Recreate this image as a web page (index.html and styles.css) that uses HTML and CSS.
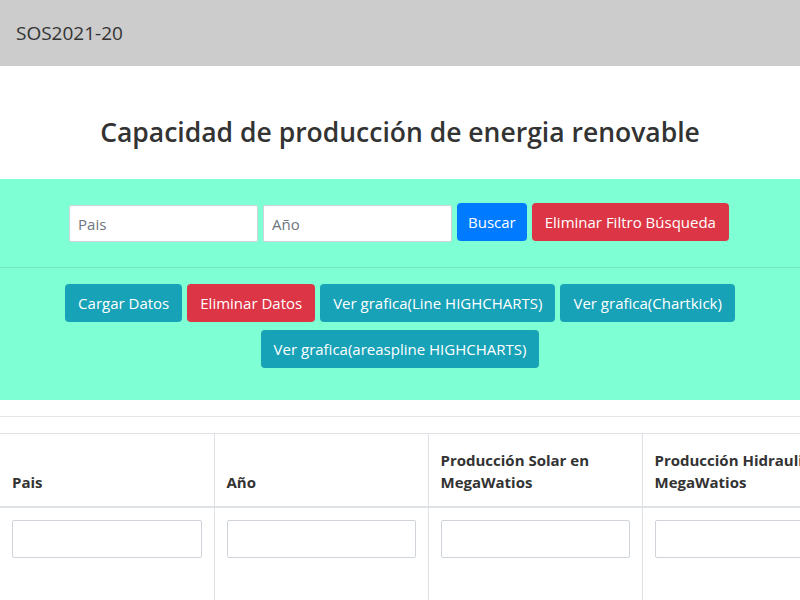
FILE: index.html
```html
<!DOCTYPE html>
<html lang="es">
<head>
<meta charset="utf-8">
<title>SOS2021-20</title>
<link rel="stylesheet" href="styles.css">
</head>
<body>
<nav class="navbar"><span class="brand">SOS2021-20</span></nav>
<main>
  <h3 class="title">Capacidad de producción de energia renovable</h3>
  <section class="panel">
    <div class="search">
      <input class="field" placeholder="Pais">
      <input class="field" placeholder="Año">
      <button class="btn primary">Buscar</button>
      <button class="btn danger">Eliminar Filtro Búsqueda</button>
    </div>
    <hr class="rule">
    <div class="actions">
      <button class="btn info">Cargar Datos</button>
      <button class="btn danger">Eliminar Datos</button>
      <button class="btn info">Ver grafica(Line HIGHCHARTS)</button>
      <button class="btn info">Ver grafica(Chartkick)</button>
      <button class="btn info">Ver grafica(areaspline HIGHCHARTS)</button>
    </div>
  </section>
  <hr class="sep">
  <div class="table-wrap">
    <table class="grid">
      <thead>
        <tr>
          <th>Pais</th>
          <th>Año</th>
          <th>Producción Solar en MegaWatios</th>
          <th>Producción Hidraulica en MegaWatios</th>
          <th>Producción Eólica en MegaWatios</th>
          <th>Acciones</th>
        </tr>
      </thead>
      <tbody>
        <tr>
          <td><input class="cell-input"></td>
          <td><input class="cell-input"></td>
          <td><input class="cell-input"></td>
          <td><input class="cell-input"></td>
          <td><input class="cell-input"></td>
          <td></td>
        </tr>
      </tbody>
    </table>
  </div>
</main>
</body>
</html>
```
FILE: styles.css
```css
html, body {
  margin: 0;
  padding: 0;
  overflow: hidden;
}
body {
  font-family: "Open Sans", "Noto Sans", sans-serif;
  color: #333333;
  background: #ffffff;
  font-size: 16px;
  line-height: 1.5;
}
.navbar {
  background: #cccccc;
  height: 66px;
  display: flex;
  align-items: center;
  padding: 0 16px;
  box-sizing: border-box;
}
.brand {
  font-size: 19px;
  color: #333333;
}
.title {
  margin: 0;
  padding: 50px 0 31px;
  line-height: 32px;
  text-align: center;
  font-size: 26.5px;
  font-weight: 600;
  color: #333333;
}
.panel {
  background: #7fffd4;
  padding: 24px 0 32px;
}
.search, .actions {
  display: flex;
  flex-wrap: wrap;
  justify-content: center;
  gap: 9px 5px;
}
.search {
  align-items: flex-start;
  padding-right: 2px;
}
.field {
  width: 189px;
  height: 37px;
  box-sizing: border-box;
  border: 1px solid #ced4da;
  border-radius: 2px;
  padding: 6px 8px;
  font: inherit;
  font-size: 15px;
  margin-top: 2px;
  background: #ffffff;
}
.field::placeholder {
  color: #6c757d;
}
.btn {
  font: inherit;
  font-size: 15px;
  height: 38px;
  padding: 0 12px;
  border: 1px solid transparent;
  border-radius: 4px;
  color: #ffffff;
  cursor: pointer;
}
.primary { background: #007bff; padding: 0 10px; }
.danger { background: #dc3545; }
.info { background: #17a2b8; }
.rule {
  margin: 25px 0 16px;
  border: 0;
  border-top: 1px solid rgba(0, 0, 0, 0.1);
}
.actions {
  padding: 0 48px;
  row-gap: 8px;
}
.sep {
  margin: 16px 0 16px;
  border: 0;
  border-top: 1px solid rgba(0, 0, 0, 0.1);
}
.table-wrap {
  overflow: hidden;
}
.grid {
  border-collapse: collapse;
  table-layout: fixed;
  width: 1284px;
}
.grid th, .grid td {
  width: 214px;
  border: 1px solid #dee2e6;
  padding: 12px;
  text-align: left;
  box-sizing: border-box;
}
.grid th {
  vertical-align: bottom;
  border-bottom: 2px solid #dee2e6;
  font-size: 15px;
  font-weight: 700;
  height: 73px;
  padding-bottom: 12px;
}
.grid td {
  vertical-align: top;
  height: 100px;
}
.cell-input {
  width: 100%;
  height: 38px;
  box-sizing: border-box;
  border: 1px solid #ced4da;
  border-radius: 2px;
  background: #ffffff;
}
.grid tr > :first-child { border-left: 0; }
```
